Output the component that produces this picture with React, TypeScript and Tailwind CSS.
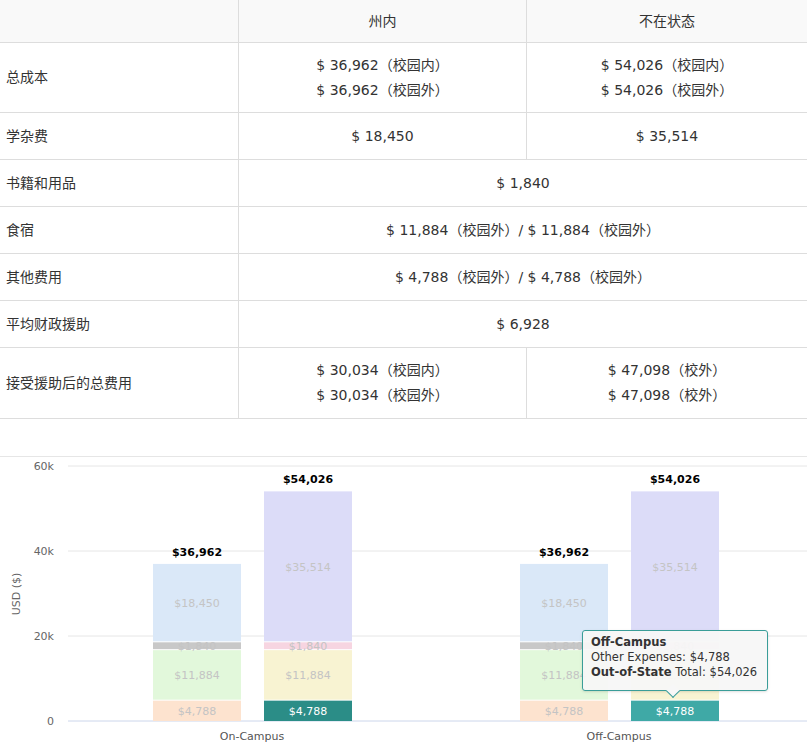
import React from "react";

const F = { fontFamily: '"DejaVu Sans","Noto Sans CJK SC",sans-serif' };

const rows: { label: string; cells: React.ReactNode[]; h: string }[] = [
  { label: "总成本", h: "h-[70px]", cells: [<><div>$ 36,962（校园内）</div><div className="mt-1">$ 36,962（校园外）</div></>, <><div>$ 54,026（校园内）</div><div className="mt-1">$ 54,026（校园外）</div></>] },
  { label: "学杂费", h: "h-[47px]", cells: ["$ 18,450", "$ 35,514"] },
  { label: "书籍和用品", h: "h-[47px]", cells: ["$ 1,840"] },
  { label: "食宿", h: "h-[47px]", cells: ["$ 11,884（校园外）/ $ 11,884（校园外）"] },
  { label: "其他费用", h: "h-[47px]", cells: ["$ 4,788（校园外）/ $ 4,788（校园外）"] },
  { label: "平均财政援助", h: "h-[47px]", cells: ["$ 6,928"] },
  { label: "接受援助后的总费用", h: "h-[70px]", cells: [<><div>$ 30,034（校园内）</div><div className="mt-1">$ 30,034（校园外）</div></>, <><div>$ 47,098（校外）</div><div className="mt-1">$ 47,098（校外）</div></>] },
];

const Y = (v: number) => 720 - v * 0.00425;

function Bar({ x, segs, total }: { x: number; segs: { v: number; c: string; t?: string }[]; total: number }) {
  let acc = 0;
  return (
    <g>
      {segs.map((s, i) => {
        const y0 = Y(acc), y1 = Y(acc + s.v);
        acc += s.v;
        return (
          <g key={i}>
            <rect x={x} y={y1} width={88} height={y0 - y1 - (i === 0 ? 0 : 1)} fill={s.c} />
            <text x={x + 44} y={(y0 + y1) / 2 + 4} textAnchor="middle" fontSize="11" fill={s.t || "#c4c4c4"}>
              ${s.v.toLocaleString("en-US")}
            </text>
          </g>
        );
      })}
      <text x={x + 44} y={Y(total) - 8} textAnchor="middle" fontSize="11" fontWeight="bold" fill="#000">${total.toLocaleString("en-US")}</text>
    </g>
  );
}

export default function App() {
  const in1 = [
    { v: 4788, c: "#fde3cf" }, { v: 11884, c: "#e2f8db" }, { v: 1840, c: "#c8c8c8" }, { v: 18450, c: "#dae8f8" },
  ];
  const out = (teal: string) => [
    { v: 4788, c: teal, t: "#fff" }, { v: 11884, c: "#f8f3d2" }, { v: 1840, c: "#f7d5e1" }, { v: 35514, c: "#dcdcf8" },
  ];
  return (
    <div className="w-[807px] h-[745px] bg-white overflow-hidden text-[14px] text-[#333]" style={F}>
      <div className="border-b border-[#ddd]">
        <div className="flex h-[43px] bg-[#f9f9f9] border-b border-[#ddd]">
          <div className="w-[239px] border-r border-[#ddd]" />
          <div className="w-[288px] border-r border-[#ddd] flex items-center justify-center">州内</div>
          <div className="flex-1 flex items-center justify-center">不在状态</div>
        </div>
        {rows.map((r, i) => (
          <div key={i} className={`flex ${r.h} ${i < rows.length - 1 ? "border-b border-[#ddd]" : ""}`}>
            <div className="w-[239px] border-r border-[#ddd] flex items-center pl-[6px]">{r.label}</div>
            {r.cells.length === 2 ? (
              <>
                <div className="w-[288px] border-r border-[#ddd] flex flex-col items-center justify-center">{r.cells[0]}</div>
                <div className="flex-1 flex flex-col items-center justify-center">{r.cells[1]}</div>
              </>
            ) : (
              <div className="flex-1 flex items-center justify-center">{r.cells[0]}</div>
            )}
          </div>
        ))}
      </div>
      <div className="relative mt-[37px] border-t border-[#e6e6e6] h-[289px]">
        <svg width="807" height="289" viewBox="0 456 807 289" className="block" style={F}>
          {[0, 20000, 40000, 60000].map((v) => (
            <g key={v}>
              <line x1="68" x2="807" y1={Y(v)} y2={Y(v)} stroke={v === 0 ? "#ccd6eb" : "#e6e6e6"} />
              <text x="54" y={Y(v) + 4} textAnchor="end" fontSize="11" fill="#666">{v === 0 ? "0" : `${v / 1000}k`}</text>
            </g>
          ))}
          <text transform="translate(20,593) rotate(-90)" textAnchor="middle" fontSize="11" fill="#666">USD ($)</text>
          <Bar x={153} segs={in1} total={36962} />
          <Bar x={264} segs={out("#2b8d87")} total={54026} />
          <Bar x={520} segs={in1} total={36962} />
          <Bar x={631} segs={out("#3fa9a6")} total={54026} />
          <text x="252" y="739" textAnchor="middle" fontSize="11" fill="#555">On-Campus</text>
          <text x="619" y="739" textAnchor="middle" fontSize="11" fill="#555">Off-Campus</text>
        </svg>
        <div className="absolute left-[582px] top-[173px] w-[186px] h-[61px] bg-[#f7f7f7]/95 border border-[#3a9d98] rounded-[3px] shadow px-[8px] py-[4px] text-[11.5px] leading-[15px] text-[#333]">
          <div className="font-bold">Off-Campus</div>
          <div>Other Expenses: $4,788</div>
          <div><span className="font-bold">Out-of-State</span> Total: $54,026</div>
          <div className="absolute left-[85px] bottom-[-6px] w-[10px] h-[10px] bg-[#f7f7f7] border-r border-b border-[#3a9d98] rotate-45" />
        </div>
      </div>
    </div>
  );
}
